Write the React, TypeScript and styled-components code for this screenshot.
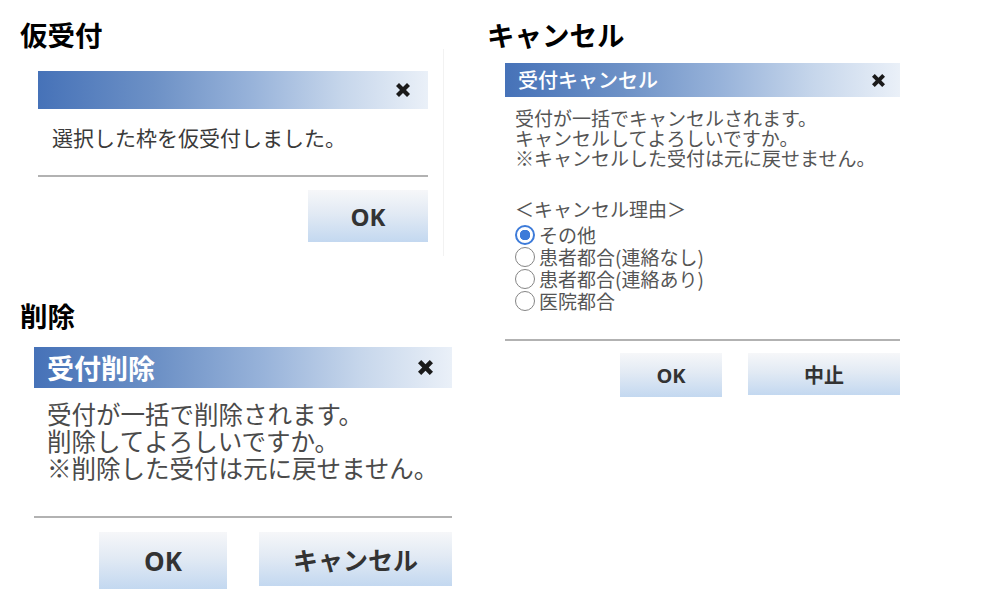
import React from 'react';
import styled, { createGlobalStyle } from 'styled-components';


const GlobalStyle = createGlobalStyle`
    html, body {
        margin: 0;
        padding: 0;
        background: #FFFFFF;
        font-family: "Noto Sans CJK JP", "Noto Sans", sans-serif;
    }
`;

const Page = styled.div`
    display: grid;
    grid-template-columns: 485px 1fr;
    width: 985px;
    height: 610px;
    overflow: hidden;
`;

const Column = styled.div`
    display: flex;
    flex-direction: column;
    align-items: flex-start;
`;

const Section = styled.section<{ $top : number; $left : number }>`
    display: flex;
    flex-direction: column;
    align-items: flex-start;
    padding-top: ${p => p.$top}px;
    padding-left: ${p => p.$left}px;
`;

const Heading = styled.h2`
    margin: 0;
    font-size: 27.5px;
    line-height: 30px;
    font-weight: 700;
    color: #000;
`;

// faint frame the first dialog was cut out of
const Frame = styled.div`
    padding: 22px 15px 14px 18px;
    border-right: 1px solid #F2F2F2;
`;

const Dialog = styled.div<{ $width : number; $top ?: number; $left ?: number }>`
    width: ${p => p.$width}px;
    margin-top: ${p => p.$top ?? 0}px;
    margin-left: ${p => p.$left ?? 0}px;
    background: #FFF;
`;

const TitleBar = styled.div<{ $height : number; $right : number }>`
    display: flex;
    align-items: center;
    justify-content: space-between;
    height: ${p => p.$height}px;
    padding: 0 ${p => p.$right}px 0 13px;
    background: linear-gradient(to right, #4672B8 0%, #6D91C6 30%, #98B3DA 55%, #C6D6EB 78%, #EAF0F8 100%);
`;

const TitleText = styled.span<{ $size : number; $bold ?: boolean }>`
    color: #FFFFFF;
    font-size: ${p => p.$size}px;
    font-weight: ${p => p.$bold ? 700 : 500};
    line-height: 1;
`;

const Body = styled.div<{ $top : number; $bottom : number; $size : number; $line : number; $color : string; $left : number }>`
    padding: ${p => p.$top}px 0 ${p => p.$bottom}px ${p => p.$left}px;
    font-size: ${p => p.$size}px;
    line-height: ${p => p.$line}px;
    color: ${p => p.$color};
    white-space: pre-line;
`;

const Divider = styled.hr`
    margin: 0;
    border: none;
    border-top: 2px solid #B2B2B2;
`;

const Footer = styled.div<{ $top : number; $gap : number }>`
    display: flex;
    justify-content: flex-end;
    align-items: flex-start;
    gap: ${p => p.$gap}px;
    padding-top: ${p => p.$top}px;
`;

const Button = styled.button<{ $w : number; $h : number; $size : number }>`
    width: ${p => p.$w}px;
    height: ${p => p.$h}px;
    padding: 0;
    border: none;
    background: linear-gradient(to bottom, #F6F7F9 0%, #E2EAF4 45%, #C3D8F0 100%);
    font-family: "Open Sans", "Noto Sans CJK JP", sans-serif;
    font-size: ${p => p.$size}px;
    font-weight: 700;
    color: #333333;
    cursor: pointer;
`;

const ReasonLabel = styled.div`
    margin-top: 30px;
    padding-left: 10px;
    font-size: 19px;
    line-height: 22px;
    color: #555555;
`;

const RadioList = styled.div`
    display: flex;
    flex-direction: column;
    margin-top: 4px;
    padding: 0 0 27px 10px;
`;

const RadioRow = styled.label`
    display: flex;
    align-items: center;
    gap: 4px;
    height: 22px;
    font-size: 19px;
    line-height: 22px;
    color: #555555;
`;

const RadioMark = styled.span<{ $checked ?: boolean }>`
    box-sizing: border-box;
    width: 20px;
    height: 20px;
    border-radius: 50%;
    border: ${p => p.$checked ? '2px solid #3D7BD9' : '1.5px solid #858585'};
    background: ${p => p.$checked ? 'radial-gradient(circle, #3D7BD9 0 5px, #FFFFFF 5.5px)' : '#FFFFFF'};
`;


function CloseIcon({ size } : { size : number })
{
    return (
        <svg width={size} height={size} viewBox="0 0 14 14">
            <path d="M0 3 L3 0 L7 4 L11 0 L14 3 L10 7 L14 11 L11 14 L7 10 L3 14 L0 11 L4 7 Z" fill="#1A1A1A" />
        </svg>
    );
}

const reasons = ['その他', '患者都合(連絡なし)', '患者都合(連絡あり)', '医院都合'];

export default function App()
{
    return (
        <Page>
            <GlobalStyle />
            <Column>
                <Section $top={19} $left={20}>
                    <Heading>仮受付</Heading>
                    <Frame>
                        <Dialog $width={390}>
                            <TitleBar $height={38} $right={18}>
                                <span />
                                <CloseIcon size={14} />
                            </TitleBar>
                            <Body $top={14} $bottom={24} $size={21} $line={28} $color="#3A3A3A" $left={14}>
                                選択した枠を仮受付しました。
                            </Body>
                            <Divider />
                            <Footer $top={13} $gap={0}>
                                <Button $w={120} $h={52} $size={24}>OK</Button>
                            </Footer>
                        </Dialog>
                    </Frame>
                </Section>
                <Section $top={44} $left={20}>
                    <Heading>削除</Heading>
                    <Dialog $width={418} $top={17} $left={14}>
                        <TitleBar $height={41} $right={19}>
                            <TitleText $size={27} $bold>受付削除</TitleText>
                            <CloseIcon size={15} />
                        </TitleBar>
                        <Body $top={12} $bottom={35} $size={24.5} $line={27} $color="#4A4A4A" $left={13}>
                            {'受付が一括で削除されます。\n削除してよろしいですか。\n※削除した受付は元に戻せません。'}
                        </Body>
                        <Divider />
                        <Footer $top={14} $gap={32}>
                            <Button $w={128} $h={57} $size={26}>OK</Button>
                            <Button $w={193} $h={54} $size={25}>キャンセル</Button>
                        </Footer>
                    </Dialog>
                </Section>
            </Column>
            <Column>
                <Section $top={19} $left={2}>
                    <Heading>キャンセル</Heading>
                    <Dialog $width={395} $top={14} $left={18}>
                        <TitleBar $height={34} $right={15}>
                            <TitleText $size={20}>受付キャンセル</TitleText>
                            <CloseIcon size={13} />
                        </TitleBar>
                        <Body $top={11} $bottom={0} $size={19} $line={20} $color="#555555" $left={10}>
                            {'受付が一括でキャンセルされます。\nキャンセルしてよろしいですか。\n※キャンセルした受付は元に戻せません。'}
                        </Body>
                        <ReasonLabel>＜キャンセル理由＞</ReasonLabel>
                        <RadioList>
                            {reasons.map((r, i) => (
                                <RadioRow key={r}>
                                    <RadioMark $checked={i === 0} />
                                    {r}
                                </RadioRow>
                            ))}
                        </RadioList>
                        <Divider />
                        <Footer $top={12} $gap={26}>
                            <Button $w={102} $h={44} $size={20}>OK</Button>
                            <Button $w={152} $h={42} $size={20}>中止</Button>
                        </Footer>
                    </Dialog>
                </Section>
            </Column>
        </Page>
    );
}
